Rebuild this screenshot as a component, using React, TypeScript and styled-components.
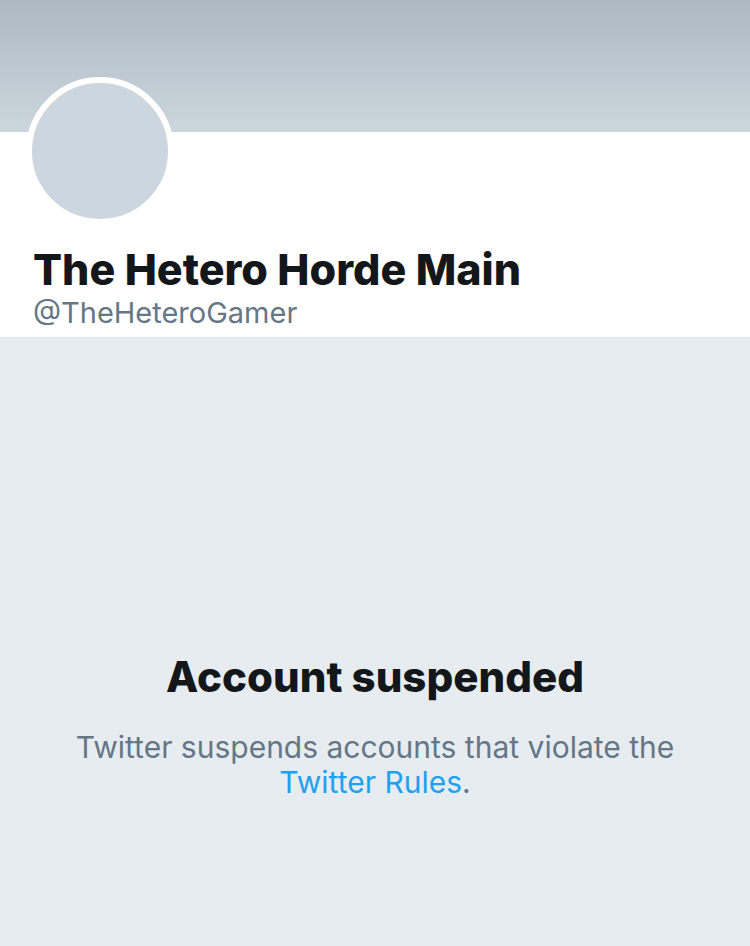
import React from "react";
import styled, { createGlobalStyle } from "styled-components";

const Global = createGlobalStyle`
  html, body { margin: 0; padding: 0; }
  body {
    background: #e6ecf0;
    font-family: Inter, "Noto Sans", "Liberation Sans", sans-serif;
    -webkit-font-smoothing: antialiased;
  }
`;

const Page = styled.div`
  width: 750px;
  min-height: 946px;
  background: #e6ecf0;
  display: flex;
  flex-direction: column;
`;

const Banner = styled.div`
  height: 132px;
  background: linear-gradient(180deg, #adb8c1 0%, #ccd6dd 100%);
`;

const Header = styled.div`
  background: #ffffff;
  height: 205px;
  padding: 0 33px;
  display: flex;
  flex-direction: column;
  border-bottom: 1px solid #e1e8ed;
`;

const Avatar = styled.div`
  width: 136px;
  height: 136px;
  flex-shrink: 0;
  border-radius: 50%;
  background: #ccd6de;
  border: 6px solid #ffffff;
  margin-top: -55px;
  margin-left: -7px;
`;

const Name = styled.h1`
  margin: 20px 0 0;
  font-size: 43px;
  line-height: 48px;
  font-weight: 800;
  color: #14171a;
  letter-spacing: 0;
  white-space: nowrap;
`;

const Handle = styled.div`
  margin-top: 3px;
  font-size: 29px;
  line-height: 34px;
  color: #657786;
  white-space: nowrap;
`;

const Suspended = styled.section`
  padding-top: 314px;
  display: flex;
  flex-direction: column;
  align-items: center;
  text-align: center;
`;

const Title = styled.h2`
  margin: 0;
  font-size: 42px;
  line-height: 50px;
  font-weight: 800;
  color: #14171a;
  letter-spacing: 0;
`;

const Body = styled.p`
  margin: 28px 0 0;
  width: 630px;
  font-size: 30px;
  line-height: 35px;
  color: #657786;
`;

const RulesLink = styled.a`
  color: #1da1f2;
  text-decoration: none;
`;

export default function App() {
  return (
    <>
      <Global />
      <Page>
        <Banner />
        <Header>
          <Avatar />
          <Name>The Hetero Horde Main</Name>
          <Handle>@TheHeteroGamer</Handle>
        </Header>
        <Suspended>
          <Title>Account suspended</Title>
          <Body>
            Twitter suspends accounts that violate the{" "}
            <RulesLink href="#">Twitter Rules</RulesLink>.
          </Body>
        </Suspended>
      </Page>
    </>
  );
}
